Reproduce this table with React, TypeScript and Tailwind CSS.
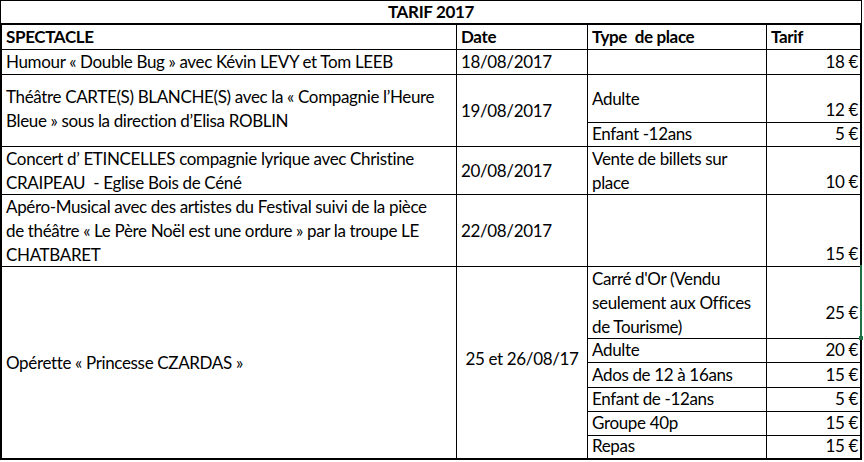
import React from "react";

const font = { fontFamily: "Lato, 'Open Sans', sans-serif" };

function C({
  className = "",
  children,
}: {
  className?: string;
  children?: React.ReactNode;
}) {
  return (
    <div className={`bg-white flex px-[4px] leading-[24px] whitespace-nowrap overflow-hidden ${className}`}>
      {children}
    </div>
  );
}

export default function App() {
  return (
    <div className="w-[864px] h-[462px] bg-white text-[17px] tracking-[-0.35px] text-black" style={font}>
      <div className="w-[862px] h-[25px] border-t border-l border-r border-b-2 border-black flex items-end justify-center font-bold leading-[22px]">
        TARIF 2017
      </div>
      <div className="relative w-[862px] grid grid-cols-[454px_130px_178px_93px] grid-rows-[24px_24px_47px_23px_47px_71px_71px_23px_24px_23px_23px_22px] gap-px bg-black border-l-2 border-r-2 border-b-2 border-black">
        {/* header */}
        <C className="bg-[#bfbfbf] font-bold items-end">SPECTACLE</C>
        <C className="bg-[#bfbfbf] font-bold items-end">Date</C>
        <C className="bg-[#bfbfbf] font-bold items-end">Type&nbsp; de place</C>
        <C className="bg-[#bfbfbf] font-bold items-end">Tarif</C>

        {/* row 1 */}
        <C className="items-end">Humour « Double Bug » avec Kévin LEVY et Tom LEEB</C>
        <C className="items-end">18/08/2017</C>
        <C />
        <C className="items-end justify-end pr-[2px]">18 €</C>

        {/* row 2 */}
        <C className="row-span-2 items-center pb-[4px]">
          <div>
            Théâtre CARTE(S) BLANCHE(S) avec la « Compagnie l’Heure
            <br />
            Bleue » sous la direction d’Elisa ROBLIN
          </div>
        </C>
        <C className="row-span-2 items-center">19/08/2017</C>
        <C className="items-center">Adulte</C>
        <C className="items-end justify-end pr-[2px]">12 €</C>
        <C className="items-end">Enfant -12ans</C>
        <C className="items-end justify-end pr-[2px]">5 €</C>

        {/* row 3 */}
        <C className="items-start">
          <div>
            Concert d’ ETINCELLES compagnie lyrique avec Christine
            <br />
            CRAIPEAU&nbsp; - Eglise Bois de Céné
          </div>
        </C>
        <C className="items-center">20/08/2017</C>
        <C className="items-start">
          <div>
            Vente de billets sur
            <br />
            place
          </div>
        </C>
        <C className="items-end justify-end pr-[2px]">10 €</C>

        {/* row 4 */}
        <C className="items-start">
          <div>
            Apéro-Musical avec des artistes du Festival suivi de la pièce
            <br />
            de théâtre « Le Père Noël est une ordure » par la troupe LE
            <br />
            CHATBARET
          </div>
        </C>
        <C className="items-center">22/08/2017</C>
        <C />
        <C className="items-end justify-end pr-[2px]">15 €</C>

        {/* row 5 */}
        <C className="row-span-6 items-center">Opérette « Princesse CZARDAS »</C>
        <C className="row-span-6 items-center justify-center pb-[8px]">25 et 26/08/17</C>
        <C className="items-start">
          <div>
            Carré d'Or (Vendu
            <br />
            seulement aux Offices
            <br />
            de Tourisme)
          </div>
        </C>
        <C className="items-start justify-end pr-[2px] pt-[34px]">25 €</C>
        <C className="items-end">Adulte</C>
        <C className="items-end justify-end pr-[2px]">20 €</C>
        <C className="items-end">Ados de 12 à 16ans</C>
        <C className="items-end justify-end pr-[2px]">15 €</C>
        <C className="items-end">Enfant de -12ans</C>
        <C className="items-end justify-end pr-[2px]">5 €</C>
        <C className="items-end">Groupe 40p</C>
        <C className="items-end justify-end pr-[2px]">15 €</C>
        <C className="items-end">Repas</C>
        <C className="items-end justify-end pr-[2px]">15 €</C>

        {/* selection highlight */}
        <div className="absolute right-[-2px] top-[240px] w-[2px] h-[73px] bg-[#217346]" />
        <div className="absolute right-[-3px] top-[311px] w-[4px] h-[4px] bg-[#217346]" />
      </div>
    </div>
  );
}
